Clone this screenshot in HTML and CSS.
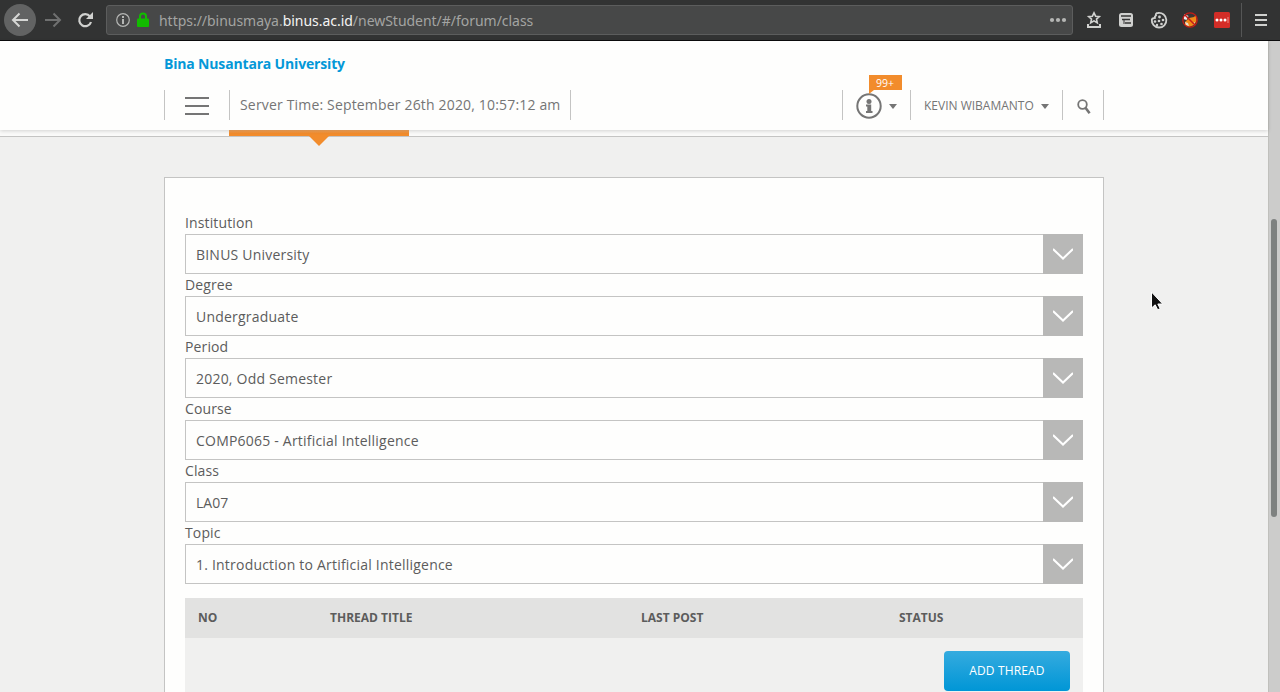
FILE: index.html
```html
<!DOCTYPE html>
<html lang="en">
<head>
<meta charset="utf-8">
<title>Forum</title>
<link rel="stylesheet" href="styles.css">
</head>
<body>
<div class="toolbar">
  <svg class="nav-icons" width="106" height="40" viewBox="0 0 106 40" fill="none">
    <circle cx="20" cy="20" r="16" fill="#626363"/>
    <path d="M28 20H13M19.5 13.500L13 20l6.500 6.500" stroke="#d6d7d5" stroke-width="2"/>
    <path d="M45 20h15M53.500 13.500L60 20l-6.500 6.500" stroke="#6f7070" stroke-width="2"/>
    <path d="M90 16.500A6 6 0 1 0 91 22" stroke="#d0d1cf" stroke-width="2.200"/>
    <path d="M93 12v7h-7z" fill="#d0d1cf"/>
  </svg>
  <div class="address">
    <svg class="site-icons" width="46" height="28" viewBox="0 0 46 28" fill="none">
      <circle cx="16" cy="14" r="6.300" stroke="#b5b6b4" stroke-width="1.200"/>
      <path d="M15 10h2v2h-2zM15 13h2v5h-2z" fill="#b5b6b4"/>
      <path d="M33 13v-2.500a3 3 0 0 1 6 0v2.500" stroke="#12bc00" stroke-width="2"/>
      <rect x="30" y="12.500" width="12" height="8.500" rx="1" fill="#12bc00"/>
    </svg>
    <span class="url">https://binusmaya.<b>binus.ac.id</b>/newStudent/#/forum/class</span>
    <svg class="dots" width="30" height="28" viewBox="0 0 30 28" fill="#b5b6b4"><circle cx="10" cy="14" r="2.100"/><circle cx="16" cy="14" r="2.100"/><circle cx="22" cy="14" r="2.100"/></svg>
  </div>
  <svg class="extensions" width="207" height="40" viewBox="0 0 207 40" fill="none">
    <path d="M21 12.800l1.600 3.400 3.700.4-2.800 2.500.8 3.700-3.300-1.900-3.300 1.900.8-3.700-2.800-2.500 3.700-.4z" stroke="#d0d1cf" stroke-width="1.600"/>
    <path d="M15 24v3h12v-3" stroke="#d0d1cf" stroke-width="2"/>
    <rect x="46" y="13" width="14" height="14" rx="2.500" fill="#d0d1cf"/>
    <path d="M48 16h10M49 19.500h8M52 23h6" stroke="#343535" stroke-width="1.300"/>
    <path d="M51 20v4" stroke="#343535"/>
    <path d="M85 13c-2 0-2.500 1-2 2.500-1 .5-1.500 1-1 2.500-2 .5-2.500 0-3.200 1.500a7.300 7.300 0 1 0 6.200-6.500z" stroke="#d0d1cf" stroke-width="1.800"/>
    <g fill="#d0d1cf"><circle cx="86.500" cy="17" r="1.400"/><circle cx="90" cy="20" r="1.300"/><circle cx="82" cy="21.500" r="1.300"/><circle cx="86" cy="21" r="1.300"/><circle cx="84" cy="25" r="1.200"/><circle cx="88.500" cy="24" r="1.300"/></g>
    <circle cx="117" cy="20" r="7.200" fill="#3d3534"/>
    <path d="M111.500 14l4 2-2 4-3-1z" fill="#eee"/>
    <path d="M112 22l4-4 5-1 2-2 .5 6-2.500 4-5 2-4-2z" fill="#f08a18"/>
    <path d="M112 22l3 1 1 3-3-1zM120 23l2-1-1 3z" fill="#e8dcd0"/>
    <circle cx="117" cy="20" r="7.200" stroke="#c51b16" stroke-width="1.300"/>
    <path d="M112 15l10 10" stroke="#c51b16" stroke-width="1.500"/>
    <rect x="141" y="12" width="16" height="16" rx="1.500" fill="#d32d27"/>
    <g fill="#fff"><circle cx="144" cy="20" r="1.500"/><circle cx="148" cy="20" r="1.500"/><circle cx="152" cy="20" r="1.500"/></g><path d="M155 17v6" stroke="#ef8d88"/>
    <path d="M168.500 3v34" stroke="#555656"/>
    <path d="M182 15h12M182 20h12M182 25h12" stroke="#d0d1cf" stroke-width="2"/>
  </svg>
</div>
<div class="viewport">
  <div class="page">
    <header class="header">
      <div class="brand">Bina Nusantara University</div>
      <div class="bar">
        <div class="cell menu"><i></i><i></i><i></i></div>
        <div class="cell time">Server Time: September 26th 2020, 10:57:12 am</div>
        <div class="cell info">
          <svg width="26" height="26" viewBox="0 0 26 26"><circle cx="13" cy="13" r="11.700" fill="none" stroke="#757575" stroke-width="2"/><circle cx="13" cy="8.400" r="2.500" fill="#757575"/><path d="M10 11.500h5.200v6.500h1.300v2H10v-2h1.300v-4.500H10z" fill="#757575"/></svg>
          <svg class="caret" width="8" height="5" viewBox="0 0 8 5"><path d="M0 0h8L4 5z" fill="#757575"/></svg>
          <span class="badge">99+</span>
        </div>
        <div class="cell user"><span>KEVIN WIBAMANTO</span><svg class="caret" width="8" height="5" viewBox="0 0 8 5"><path d="M0 0h8L4 5z" fill="#757575"/></svg></div>
        <div class="cell search"><svg width="14" height="16" viewBox="0 0 14 16" fill="none" stroke="#757575"><circle cx="5.500" cy="5.500" r="4.300" stroke-width="1.800"/><path d="M8.300 8.500l4.300 5.700" stroke-width="2.600"/></svg></div>
      </div>
    </header>
    <div class="strip"><div class="tab"></div></div>
    <main class="panel">
      <label class="label">Institution</label>
      <div class="select"><span>BINUS University</span><div class="arrow"><svg width="20" height="12" viewBox="0 0 20 12"><path d="M0 1l10 9.500L20 1"/></svg></div></div>
      <label class="label">Degree</label>
      <div class="select"><span>Undergraduate</span><div class="arrow"><svg width="20" height="12" viewBox="0 0 20 12"><path d="M0 1l10 9.500L20 1"/></svg></div></div>
      <label class="label">Period</label>
      <div class="select"><span>2020, Odd Semester</span><div class="arrow"><svg width="20" height="12" viewBox="0 0 20 12"><path d="M0 1l10 9.500L20 1"/></svg></div></div>
      <label class="label">Course</label>
      <div class="select"><span>COMP6065 - Artificial Intelligence</span><div class="arrow"><svg width="20" height="12" viewBox="0 0 20 12"><path d="M0 1l10 9.500L20 1"/></svg></div></div>
      <label class="label">Class</label>
      <div class="select tight"><span>LA07</span><div class="arrow"><svg width="20" height="12" viewBox="0 0 20 12"><path d="M0 1l10 9.500L20 1"/></svg></div></div>
      <label class="label">Topic</label>
      <div class="select"><span>1. Introduction to Artificial Intelligence</span><div class="arrow"><svg width="20" height="12" viewBox="0 0 20 12"><path d="M0 1l10 9.500L20 1"/></svg></div></div>
      <div class="threads">
        <div class="thread-head"><span>NO</span><span>THREAD TITLE</span><span>LAST POST</span><span>STATUS</span></div>
        <div class="thread-foot"><button class="add">ADD THREAD</button></div>
      </div>
    </main>
  </div>
  <div class="scrollbar"><div class="thumb"></div></div>
</div>
<svg class="cursor" width="16" height="22" viewBox="0 0 16 22"><path d="M1.500 2v16l3.700-3.200 2.500 5 2.500-1.200-2.400-4.600h4.900z" fill="#111" stroke="#fff"/></svg>
</body>
</html>
```
FILE: styles.css
```css
* { box-sizing: border-box; }
body {
  margin: 0;
  width: 1280px;
  height: 692px;
  overflow: hidden;
  font-family: "Open Sans", "Noto Sans", sans-serif;
  font-size: 14px;
  color: #5c5c5c;
  background: #f0f0ef;
}
svg { display: block; flex: none; }
.toolbar {
  display: flex;
  align-items: flex-start;
  height: 41px;
  background: #323333;
  border-bottom: 1px solid #0c0c0d;
}
.address {
  display: flex;
  width: 967px;
  height: 30px;
  margin-top: 5px;
  background: #474848;
  border: 1px solid #5c5d5d;
  border-radius: 3px;
}
.url {
  flex: 1;
  margin-left: 6px;
  font: 14px/29px "Noto Sans", sans-serif;
  letter-spacing: -0.03px;
  color: #a3a4a2;
  white-space: nowrap;
}
.url b { font-weight: 400; color: #f4f4f3; }
.viewport { display: flex; height: 651px; }
.page { width: 1268px; }
.header {
  position: relative;
  z-index: 1;
  height: 89px;
  padding: 13px 164px 0;
  background: #fefefd;
  box-shadow: 0 1px 4px rgba(0, 0, 0, .16);
}
.brand {
  height: 20px;
  line-height: 20px;
  font-size: 14px;
  letter-spacing: -0.17px;
  font-weight: 700;
  color: #0498d8;
}
.bar { display: flex; height: 30px; margin-top: 16px; }
.cell {
  display: flex;
  align-items: center;
  border-left: 1px solid #c4c4c3;
  color: #757575;
}
.menu {
  flex-direction: column;
  justify-content: center;
  gap: 6px;
  width: 65px;
  padding-top: 2px;
}
.menu i { width: 24px; height: 2px; background: #757575; }
.time {
  width: 342px;
  padding: 0 0 2px 10px;
  border-right: 1px solid #c4c4c3;
  letter-spacing: 0.17px;
  white-space: nowrap;
}
.info {
  position: relative;
  width: 68px;
  margin-left: auto;
  padding-left: 13px;
  gap: 7px;
}
.info > svg { margin-top: 2px; }
.badge {
  position: absolute;
  left: 26px;
  top: -15px;
  width: 33px;
  height: 15px;
  padding-left: 7px;
  font-size: 10.500px;
  line-height: 16px;
  color: #fff;
  background: #f28c2c;
}
.badge::after {
  content: "";
  position: absolute;
  left: 0;
  top: 15px;
  border-top: 4px solid #f28c2c;
  border-right: 5px solid transparent;
}
.user {
  width: 152px;
  padding-left: 13px;
  gap: 7px;
  font-size: 12px;
  white-space: nowrap;
}
.user .caret { margin-top: 2px; }
.search { width: 42px; padding-left: 14px; border-right: 1px solid #c4c4c3; }
.search svg { margin-top: 3px; }
.strip {
  height: 7px;
  padding-left: 229px;
  background: #fafaf9;
  border-bottom: 1px solid #c4c4c3;
}
.tab {
  position: relative;
  width: 180px;
  height: 6px;
  background: linear-gradient(#f7a75e, #f28c2c 60%);
}
.tab::after {
  content: "";
  position: absolute;
  left: 80px;
  top: 6px;
  border: 10px solid transparent;
  border-top-color: #f28c2c;
  border-bottom: 0;
}
.panel {
  width: 940px;
  height: 515px;
  margin: 40px 0 0 164px;
  padding: 34px 20px 0;
  background: #fefefd;
  border: 1px solid #c4c4c3;
  border-bottom: 0;
}
.label { display: block; height: 22px; line-height: 22px; letter-spacing: 0.13px; }
.select {
  display: flex;
  width: 898px;
  height: 40px;
  border: 1px solid #c4c4c3;
  border-right: 0;
}
.select span { flex: 1; padding-left: 10px; line-height: 39px; letter-spacing: 0.21px; }
.tight span { letter-spacing: 0; }
.arrow {
  display: flex;
  justify-content: center;
  width: 40px;
  height: 40px;
  margin-top: -1px;
  padding-top: 14px;
  background: #b8b8b7;
}
.arrow path { fill: none; stroke: #fff; stroke-width: 2; }
.threads { margin-top: 14px; background: #f0f0ef; }
.thread-head {
  display: grid;
  grid-template-columns: 132px 311px 258px 1fr;
  height: 40px;
  padding-left: 13px;
  background: #e2e2e1;
  font-size: 12px;
  font-weight: 700;
  line-height: 39px;
}
.thread-foot { display: flex; justify-content: flex-end; height: 54px; padding: 13px 13px 0; }
.add {
  width: 126px;
  height: 40px;
  padding: 0 0 2px;
  border: 0;
  border-radius: 4px;
  font: 12px "Open Sans", sans-serif;
  letter-spacing: 0.15px;
  color: #fff;
  background: linear-gradient(#35abdf, #0096d6);
}
.scrollbar {
  width: 12px;
  padding: 178px 3px 0 2px;
  background: #cccccb;
  border-left: 1px solid #c0c0bc;
}
.thumb { width: 6px; height: 298px; border-radius: 3px; background: #7e8180; }
.cursor { position: absolute; left: 1150px; top: 290px; }
```
